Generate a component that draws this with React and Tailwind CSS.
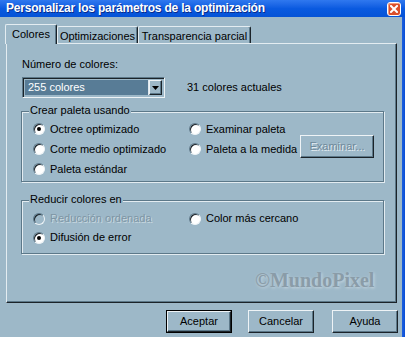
// classic Windows-style dialog, steel-blue theme
const Radio = ({ label, checked, disabled, h = 'h-[20px]' }) => (
  <div className={`flex items-center ${h}`}>
    <span
      className={`relative w-[12px] h-[12px] shrink-0 rounded-full border border-t-[#5c7889] border-l-[#5c7889] border-b-[#eef3f6] border-r-[#eef3f6] shadow-[inset_1px_1px_0_#1b2329] ${disabled ? 'bg-[#9db8c8]' : 'bg-white'}`}
    >
      {checked && <span className="absolute left-[3px] top-[3px] w-[4px] h-[4px] rounded-full bg-black" />}
    </span>
    <span className={`ml-[5px] whitespace-nowrap ${disabled ? 'text-[#7d95a4] [text-shadow:1px_1px_0_#c9d8e0]' : 'text-black'}`}>{label}</span>
  </div>
);

const Group = ({ title, className, children }) => (
  <div className={`relative border border-[#5c7889] shadow-[inset_1px_1px_0_#e3ecf1,1px_1px_0_#e3ecf1] ${className}`}>
    <span className="absolute -top-[8px] left-[7px] px-[1px] bg-[#9db8c8] leading-[13px] whitespace-nowrap">{title}</span>
    {children}
  </div>
);

const Raised = ({ children, className = '', textClass = 'text-black' }) => (
  <div
    className={`flex items-center justify-center border-t border-l border-t-[#eef3f6] border-l-[#eef3f6] border-r border-b border-r-[#1b2329] border-b-[#1b2329] shadow-[inset_-1px_-1px_0_#5c7889] ${textClass} ${className}`}
  >
    {children}
  </div>
);

const Tab = ({ label, active, width }) =>
  active ? (
    <div className={`relative z-10 -mb-px h-[20px] ${width} flex items-center justify-center bg-[#9db8c8] rounded-t-[2px] border-t border-l border-t-[#e3ecf1] border-l-[#e3ecf1] border-r border-r-[#1b2329] shadow-[inset_-1px_0_0_#5c7889]`}>
      {label}
    </div>
  ) : (
    <div className={`h-[17px] ${width} flex items-center justify-center pt-[2px] rounded-t-[2px] border-t border-l border-t-[#e3ecf1] border-l-[#e3ecf1] border-r border-r-[#1b2329] shadow-[inset_-1px_0_0_#5c7889]`}>
      {label}
    </div>
  );

export default function App() {
  return (
    <div className="w-[405px] h-[337px] overflow-hidden bg-[#9db8c8] font-['Liberation_Sans',Arial,sans-serif] text-[11px] leading-[13px] text-black">
      {/* title bar */}
      <div className="h-[17px] flex items-center bg-gradient-to-b from-[#2f78ef] via-[#0a5ae0] to-[#0553d6]">
        <span className="ml-[6px] text-white font-bold text-[12px] tracking-[-0.2px] [text-shadow:1px_1px_0_#0a2c8a]">
          Personalizar los parámetros de la optimización
        </span>
        <div className="ml-auto mr-[4px] w-[14px] h-[14px] rounded-[3px] border border-white bg-[#db4f2a] shadow-[inset_1px_1px_0_#f29a7c] flex items-center justify-center">
          <svg width="8" height="8" viewBox="0 0 8 8">
            <path d="M1 1L7 7M7 1L1 7" stroke="#ffffff" strokeWidth="2" strokeLinecap="square" />
          </svg>
        </div>
      </div>

      <div className="flex h-[320px]">
        <div className="w-[402px]">
          {/* tabs */}
          <div className="flex items-end h-[19px] mt-[7px] ml-[5px]">
            <Tab label="Colores" active width="w-[52px]" />
            <Tab label="Optimizaciones" width="w-[81px]" />
            <Tab label="Transparencia parcial" width="w-[113px]" />
          </div>

          {/* panel */}
          <div className="relative ml-[6px] w-[391px] h-[260px] border-t border-l border-t-[#e3ecf1] border-l-[#e3ecf1] border-r border-b border-r-[#1b2329] border-b-[#1b2329] shadow-[inset_-1px_-1px_0_#5c7889] pl-[15px] pt-[14px]">
            <div>Número de colores:</div>
            <div className="flex items-center mt-[6px]">
              <div className="w-[143px] h-[21px] flex p-[2px] border border-t-[#5c7889] border-l-[#5c7889] border-b-[#eef3f6] border-r-[#eef3f6] shadow-[inset_1px_1px_0_#1b2329]">
                <div className="flex-1 flex items-center bg-[#587c96] text-white pl-[3px] border-r border-r-[#dfe8ee]">255 colores</div>
                <Raised className="w-[13px] bg-[#9db8c8]">
                  <svg width="7" height="4" viewBox="0 0 7 4">
                    <path d="M0 0h7L3.5 4z" fill="#000" />
                  </svg>
                </Raised>
              </div>
              <span className="ml-[22px]">31 colores actuales</span>
            </div>

            <Group title="Crear paleta usando" className="mt-[13px] -ml-[1px] w-[363px]">
              <div className="flex pl-[11px] pt-[7px] pb-[2px]">
                <div className="w-[156px]">
                  <Radio label="Octree optimizado" checked />
                  <Radio label="Corte medio optimizado" />
                  <Radio label="Paleta estándar" />
                </div>
                <div className="w-[111px]">
                  <Radio label="Examinar paleta" />
                  <Radio label="Paleta a la medida" />
                </div>
                <Raised className="mt-[16px] w-[74px] h-[23px]" textClass="text-[#6f899a] [text-shadow:1px_1px_0_#e3ecf1]">
                  Examinar...
                </Raised>
              </div>
            </Group>

            <Group title="Reducir colores en" className="mt-[18px] -ml-[1px] w-[363px]">
              <div className="flex pl-[11px] pt-[8px] pb-[6px]">
                <div className="w-[156px]">
                  <Radio label="Reducción ordenada" disabled h="h-[19px]" />
                  <Radio label="Difusión de error" checked h="h-[19px]" />
                </div>
                <div>
                  <Radio label="Color más cercano" h="h-[19px]" />
                </div>
              </div>
            </Group>

            {/* watermark */}
            <span className="absolute left-[248px] top-[225px] font-['Liberation_Serif',serif] font-bold text-[20px] leading-[23px] text-[#8a9ca8] [text-shadow:1px_1px_3px_#cad8e0]">
              ©MundoPixel
            </span>
          </div>

          {/* buttons */}
          <div className="flex mt-[7px]">
            <div className="ml-[166px] border border-black">
              <Raised className="w-[64px] h-[21px]">Aceptar</Raised>
            </div>
            <Raised className="ml-[16px] w-[66px] h-[23px]">Cancelar</Raised>
            <Raised className="ml-[18px] w-[66px] h-[23px]">Ayuda</Raised>
          </div>
        </div>
        <div className="flex-1 bg-gradient-to-r from-[#1c5fe0] to-[#0a4ed4]" />
      </div>
    </div>
  );
}
